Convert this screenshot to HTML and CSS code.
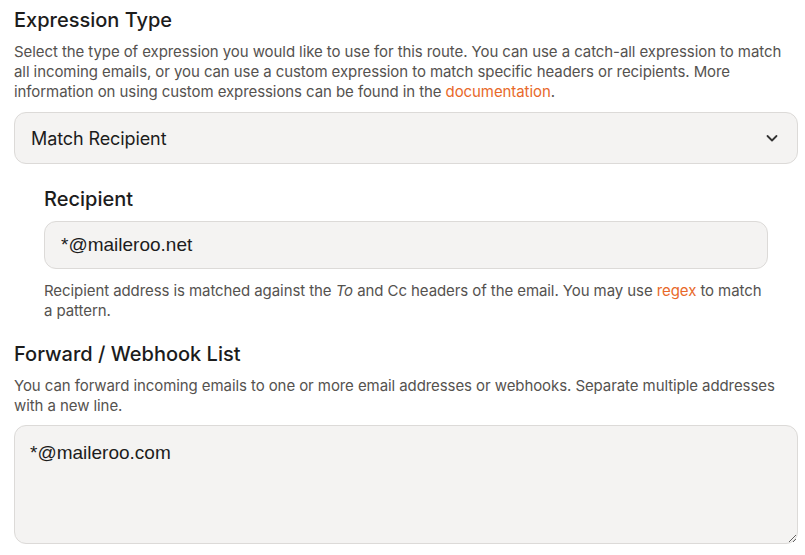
FILE: index.html
```html
<!DOCTYPE html>
<html lang="en">
<head>
    <meta charset="UTF-8">
    <meta name="viewport" content="width=device-width, initial-scale=1.0">
    <title>Route</title>
    <link rel="stylesheet" href="styles.css">
</head>
<body>
    <form class="route-form">
        <div class="field">
            <h2 class="field-title">Expression Type</h2>
            <p class="field-help">Select the type of expression you would like to use for this route. You can use a catch-all expression to match all incoming emails, or you can use a custom expression to match specific headers or recipients. More information on using custom expressions can be found in the <a href="#">documentation</a>.</p>
            <div class="select-box">
                <span>Match Recipient</span>
                <svg class="chevron" width="16" height="16" viewBox="0 0 16 16" fill="none" stroke="#333" stroke-width="1.8" stroke-linecap="round" stroke-linejoin="round"><path d="M3.5 6l4.5 4.5L12.5 6"/></svg>
            </div>
        </div>

        <!-- sub field shown for "Match Recipient" -->
        <div class="field sub-field">
            <h2 class="field-title">Recipient</h2>
            <input class="text-input" type="text" value="*@maileroo.net">
            <p class="field-help">Recipient address is matched against the <i>To</i> and Cc headers of the email. You may use <a href="#">regex</a> to match a pattern.</p>
        </div>

        <div class="field">
            <h2 class="field-title">Forward / Webhook List</h2>
            <p class="field-help">You can forward incoming emails to one or more email addresses or webhooks. Separate multiple addresses with a new line.</p>
            <textarea class="text-area">*@maileroo.com</textarea>
        </div>
    </form>
</body>
</html>
```

FILE: styles.css
```css
body {
    margin: 0;
    font-family: Inter, "Noto Sans", sans-serif;
    color: #1c1c1c;
    background: #fff;
}

.route-form {
    padding: 7px 7px 0 14px;
}

.field {
    margin-bottom: 22px;
}

.sub-field {
    padding: 0 30px;
    margin-bottom: 20px;
}

.field-title {
    font-size: 20px;
    font-weight: 500;
    margin: 0 0 9px;
    line-height: 26px;
}

.field-help {
    font-size: 15px;
    line-height: 20px;
    letter-spacing: -0.08px;
    color: #55524f;
    margin: 0 0 9px;
}

.field-help a {
    color: #e8692a;
    text-decoration: none;
}

.sub-field .field-help {
    margin: 0;
}

.select-box {
    display: flex;
    align-items: center;
    justify-content: space-between;
    height: 52px;
    box-sizing: border-box;
    margin-top: 10px;
    padding: 0 17px 0 16px;
    background: #f4f3f2;
    border: 1px solid #dcdad8;
    border-radius: 12px;
    font-size: 18px;
    letter-spacing: -0.1px;
}

.text-input,
.text-area {
    display: block;
    width: 100%;
    box-sizing: border-box;
    background: #f4f3f2;
    border: 1px solid #dcdad8;
    border-radius: 12px;
    font-family: "Liberation Sans", Arial, sans-serif;
    font-size: 19px;
    color: #1c1c1c;
}

.text-input {
    height: 48px;
    padding: 0 16px;
    margin-bottom: 12px;
}

.text-area {
    height: 119px;
    padding: 16px 15px;
    resize: vertical;
}
```
